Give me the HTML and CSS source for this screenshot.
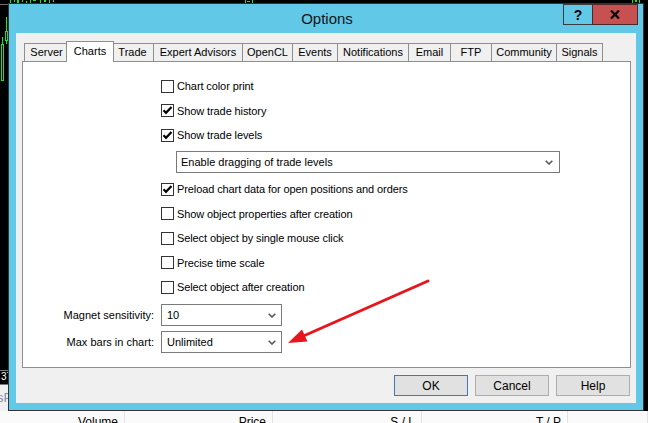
FILE: index.html
```html
<!DOCTYPE html>
<html>
<head>
<meta charset="utf-8">
<link rel="stylesheet" href="styles.css">
</head>
<body>
<div class="screen">
  <div class="topstrip">
    <svg width="648" height="3" class="ticks">
      <rect x="10" y="0" width="1" height="3" fill="#1ee61e"/>
      <rect x="14" y="0" width="1" height="2" fill="#1ee61e"/>
      <rect x="17" y="0" width="2" height="3" fill="#1ee61e"/>
      <rect x="22" y="0" width="1" height="2" fill="#1ee61e"/>
      <rect x="26" y="1" width="1" height="2" fill="#1ee61e"/>
      <rect x="30" y="0" width="1" height="3" fill="#1ee61e"/>
      <rect x="33" y="0" width="3" height="1" fill="#1ee61e"/>
      <rect x="40" y="0" width="1" height="3" fill="#1ee61e"/>
      <rect x="44" y="0" width="2" height="2" fill="#1ee61e"/>
      <rect x="49" y="0" width="1" height="3" fill="#1ee61e"/>
      <rect x="53" y="0" width="1" height="2" fill="#1ee61e"/>
      <rect x="245" y="0" width="1" height="3" fill="#1ee61e"/>
      <rect x="247" y="1" width="3" height="1" fill="#1ee61e"/>
      <rect x="252" y="0" width="1" height="3" fill="#1ee61e"/>
      <rect x="632" y="0" width="1" height="3" fill="#1ee61e"/>
      <rect x="635" y="0" width="2" height="2" fill="#1ee61e"/>
      <rect x="639" y="0" width="1" height="3" fill="#1ee61e"/>
    </svg>
  </div>
  <div class="middle">
    <div class="leftstrip">
      <svg class="candles" width="8" height="367">
        <rect x="0" y="1" width="8" height="1" fill="#6e6e6e"/>
        <line x1="6.5" y1="14" x2="6.5" y2="41" stroke="#1ee61e" stroke-width="1"/>
        <rect x="5.5" y="28.5" width="2" height="9" fill="#000" stroke="#1ee61e" stroke-width="1"/>
        <line x1="2.5" y1="34" x2="2.5" y2="41" stroke="#1ee61e" stroke-width="1"/>
        <rect x="1.5" y="41.5" width="2" height="36" fill="#000" stroke="#1ee61e" stroke-width="1"/>
      </svg>
      <div class="pricetag">37,</div>
      <div class="leftpanel">sP</div>
    </div>
    <div class="window">
      <div class="titlebar">
        <span class="title">Options</span>
        <div class="caption-btns">
          <div class="cap cap-help">?</div>
          <div class="cap cap-close">
            <svg width="10" height="9" viewBox="0 0 10 9"><path d="M1 0.5 L9 8.5 M9 0.5 L1 8.5" stroke="#000" stroke-width="2.2" fill="none"/></svg>
          </div>
        </div>
      </div>
      <div class="client">
        <div class="tabs">
          <div class="tab">Server</div>
          <div class="tab tab-active">Charts</div>
          <div class="tab">Trade</div>
          <div class="tab">Expert Advisors</div>
          <div class="tab">OpenCL</div>
          <div class="tab">Events</div>
          <div class="tab">Notifications</div>
          <div class="tab">Email</div>
          <div class="tab">FTP</div>
          <div class="tab">Community</div>
          <div class="tab">Signals</div>
        </div>
        <div class="page">
          <div class="checks">
            <label class="row"><span class="box"></span><span>Chart color print</span></label>
            <label class="row"><span class="box checked"><svg width="11" height="11" viewBox="0 0 11 11"><path d="M1.5 5.2 L4 7.8 L9.5 2" stroke="#000" stroke-width="2.2" fill="none"/></svg></span><span>Show trade history</span></label>
            <label class="row"><span class="box checked"><svg width="11" height="11" viewBox="0 0 11 11"><path d="M1.5 5.2 L4 7.8 L9.5 2" stroke="#000" stroke-width="2.2" fill="none"/></svg></span><span>Show trade levels</span></label>
            <div class="select select-wide">
              <span>Enable dragging of trade levels</span>
              <svg class="chev" width="8" height="5" viewBox="0 0 8 5"><path d="M0.7 0.7 L4 4 L7.3 0.7" stroke="#5a5a5a" stroke-width="1.6" fill="none"/></svg>
            </div>
            <label class="row"><span class="box checked"><svg width="11" height="11" viewBox="0 0 11 11"><path d="M1.5 5.2 L4 7.8 L9.5 2" stroke="#000" stroke-width="2.2" fill="none"/></svg></span><span>Preload chart data for open positions and orders</span></label>
            <label class="row"><span class="box"></span><span>Show object properties after creation</span></label>
            <label class="row"><span class="box"></span><span>Select object by single mouse click</span></label>
            <label class="row"><span class="box"></span><span>Precise time scale</span></label>
            <label class="row"><span class="box"></span><span>Select object after creation</span></label>
          </div>
          <div class="form">
            <span class="lbl">Magnet sensitivity:</span>
            <div class="select">
              <span>10</span>
              <svg class="chev" width="8" height="5" viewBox="0 0 8 5"><path d="M0.7 0.7 L4 4 L7.3 0.7" stroke="#5a5a5a" stroke-width="1.6" fill="none"/></svg>
            </div>
            <span class="lbl">Max bars in chart:</span>
            <div class="select">
              <span>Unlimited</span>
              <svg class="chev" width="8" height="5" viewBox="0 0 8 5"><path d="M0.7 0.7 L4 4 L7.3 0.7" stroke="#5a5a5a" stroke-width="1.6" fill="none"/></svg>
            </div>
          </div>
        </div>
        <div class="buttons">
          <div class="btn btn-default">OK</div>
          <div class="btn">Cancel</div>
          <div class="btn">Help</div>
        </div>
      </div>
    </div>
    <div class="rightstrip"></div>
  </div>
  <div class="bottomstrip">
    <div class="col">Volume</div>
    <div class="col">Price</div>
    <div class="col">S / L</div>
    <div class="col">T / P</div>
    <div class="col"></div>
  </div>
  <svg class="arrow" width="648" height="423" viewBox="0 0 648 423">
    <line x1="428" y1="281" x2="300" y2="337.5" stroke="#e8161c" stroke-width="3" stroke-linecap="round"/>
    <polygon points="288,343 302,329.5 307.5,341.5" fill="#e8161c"/>
  </svg>
</div>
</body>
</html>
```

FILE: styles.css
```css
* { box-sizing: border-box; }
html, body { margin: 0; padding: 0; }
body {
  font-family: "Liberation Sans", Arial, sans-serif;
  font-size: 11px;
  color: #000;
  background: #000;
}
.screen {
  position: relative;
  width: 648px;
  height: 423px;
  overflow: hidden;
  background: #000;
  display: flex;
  flex-direction: column;
}
.topstrip { height: 3px; flex: none; overflow: hidden; }
.ticks { display: block; }
.middle { height: 408px; flex: none; display: flex; }
.leftstrip {
  width: 8px;
  flex: none;
  display: flex;
  flex-direction: column;
  overflow: hidden;
}
.candles { display: block; flex: none; }
.pricetag {
  height: 15px;
  flex: none;
  border-top: 1px solid #7a7a7a;
  border-bottom: 1px solid #7a7a7a;
  color: #fff;
  font-size: 10px;
  line-height: 12px;
  padding-left: 1px;
  white-space: nowrap;
  overflow: hidden;
}
.leftpanel {
  flex: 1;
  background: #f0f0f0;
  color: #8c8aa6;
  font-size: 13px;
  line-height: 16px;
  padding-top: 5px;
  margin-left: -3px;
  white-space: nowrap;
}
.rightstrip { flex: 1; background: #000; }

.window {
  width: 636px;
  height: 408px;
  flex: none;
  position: relative;
  border: 1px solid #343434;
  background: #62c8e8;
  padding: 0 7px 7px;
  display: flex;
  flex-direction: column;
}
.titlebar {
  height: 29px;
  flex: none;
  display: flex;
  align-items: center;
  justify-content: center;
}
.title {
  font-size: 15px;
  color: #141414;
  padding-bottom: 1px;
  padding-left: 2px;
}
.caption-btns {
  position: absolute;
  top: 0;
  right: 5px;
  display: flex;
}
.cap {
  height: 21px;
  border: 1px solid #3c3c3c;
  display: flex;
  align-items: center;
  justify-content: center;
  font-weight: bold;
  font-size: 14px;
}
.cap-help { width: 29px; background: #62c8e8; border-right: none; }
.cap-close { width: 46px; background: #c75050; border-color: #4a2a2a; }

.client {
  flex: 1;
  background: #f0f0f0;
  padding: 8px 5px 7px 6px;
  display: flex;
  flex-direction: column;
}
.tabs {
  height: 20px;
  flex: none;
  display: flex;
  align-items: flex-end;
  padding-left: 2px;
  position: relative;
  z-index: 1;
}
.tab {
  height: 18px;
  flex: none;
  border: 1px solid #8e8e8e;
  border-bottom: none;
  margin-left: -1px;
  background: #f0f0f0;
  display: flex;
  align-items: center;
  justify-content: center;
  white-space: nowrap;
  padding-bottom: 1px;
}
.tab:nth-child(1) { width: 45px; margin-left: 0; }
.tab:nth-child(2) { width: 48px; }
.tab:nth-child(3) { width: 43px; }
.tab:nth-child(4) { width: 90px; }
.tab:nth-child(5) { width: 51px; }
.tab:nth-child(6) { width: 46px; }
.tab:nth-child(7) { width: 72px; }
.tab:nth-child(8) { width: 43px; }
.tab:nth-child(9) { width: 42px; }
.tab:nth-child(10) { width: 66px; }
.tab:nth-child(11) { width: 47px; }
.tab.tab-active {
  height: 21px;
  margin-left: -3px;
  margin-right: -2px;
  margin-bottom: -1px;
  background: #fff;
  position: relative;
  z-index: 2;
  padding-bottom: 3px;
}
.tab-active + .tab { border-left-color: transparent; }

.page {
  height: 307px;
  flex: none;
  width: 609px;
  border: 1px solid #8e8e8e;
  background: #fff;
  padding-top: 12px;
}
.checks {
  padding-left: 138px;
  display: flex;
  flex-direction: column;
}
.row {
  height: 24.5px;
  display: flex;
  align-items: center;
  gap: 3px;
  white-space: nowrap;
  letter-spacing: -0.1px;
}
.box {
  width: 13px;
  height: 13px;
  flex: none;
  border: 1px solid #333;
  background: #fff;
  display: flex;
  align-items: center;
  justify-content: center;
}
.box svg { display: block; }
.select {
  height: 22px;
  border: 1px solid #7a7a7a;
  background: #fff;
  display: flex;
  align-items: center;
  justify-content: space-between;
  padding: 0 5px 0 5px;
  white-space: nowrap;
}
.select-wide {
  width: 384px;
  margin: 3.75px 0 3.75px 15px;
  padding-left: 4px;
  padding-right: 6px;
}
.chev { display: block; flex: none; }
.form {
  margin-top: 4.75px;
  display: grid;
  grid-template-columns: 131px 121px;
  grid-auto-rows: 22px;
  column-gap: 7px;
  row-gap: 5px;
  align-items: center;
}
.lbl { text-align: right; white-space: nowrap; }

.buttons {
  margin-top: 7px;
  height: 21px;
  flex: none;
  display: flex;
  justify-content: flex-end;
  gap: 7px;
  padding-right: 1px;
}
.btn {
  width: 74px;
  height: 21px;
  border: 1px solid #adadad;
  background: #e1e1e1;
  display: flex;
  align-items: center;
  justify-content: center;
  font-size: 12px;
}
.btn-default { border-color: #3d7ab8; }

.bottomstrip {
  flex: 1;
  background: #fafafa;
  display: grid;
  grid-template-columns: 125px 148px 149px 146px 1fr;
}
.col {
  border-right: 1px solid #e2e2e2;
  text-align: right;
  padding: 4px 6px 0 0;
  font-size: 12px;
  line-height: 14px;
  white-space: nowrap;
}
.arrow {
  position: absolute;
  left: 0;
  top: 0;
  pointer-events: none;
}
```
